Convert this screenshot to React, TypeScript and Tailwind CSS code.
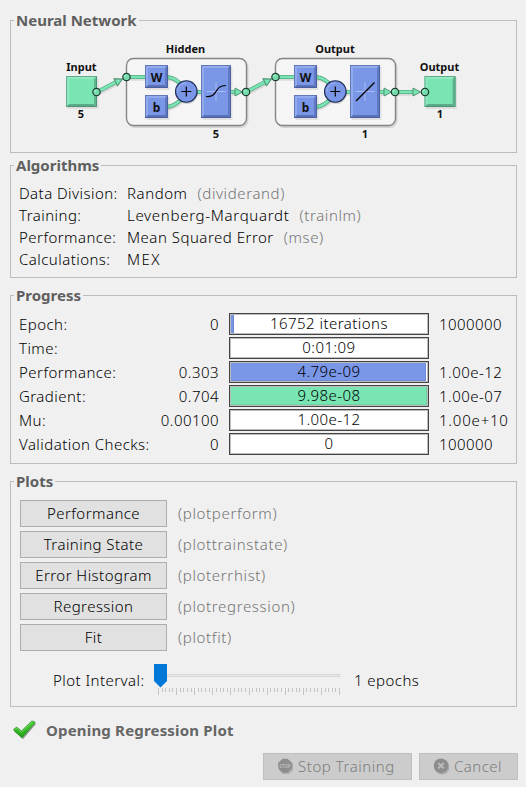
import type { ReactNode } from "react";

function Panel({ title, className, children }: { title: string; className: string; children: ReactNode }) {
  return (
    <fieldset className={`w-[507px] border border-[#bdbdbd] ${className}`}>
      <legend className="ml-[3px] h-[17px] px-[2px] text-[15px] leading-[17px] font-bold tracking-normal text-[#5f5f5f]">{title}</legend>
      {children}
    </fieldset>
  );
}

function Bevel({ x, y, w, h, green }: { x: number; y: number; w: number; h: number; green?: boolean }) {
  const c = green
    ? { f: "#79e5b3", l: "#8fe9c1", r: "#5fb68f", b: "#5aac88", s: "#3f7b61" }
    : { f: "#7a96e6", l: "#93aaee", r: "#6079c2", b: "#5a71b8", s: "#3d4f88" };
  const X = x + w;
  const Y = y + h;
  return (
    <g>
      <rect x={x + 1.5} y={y + 2} width={w} height={h} fill="#000" opacity="0.08" />
      <rect x={x} y={y} width={w} height={h} fill={c.f} />
      <path d={`M${x} ${y}H${X}L${X - 3} ${y + 3}H${x + 3}V${Y - 3}L${x} ${Y}Z`} fill={c.l} />
      <path d={`M${X} ${y}V${Y}L${X - 3} ${Y - 3}V${y + 3}Z`} fill={c.r} />
      <path d={`M${x} ${Y}H${X}L${X - 3} ${Y - 3}H${x + 3}Z`} fill={c.b} />
      <rect x={x + 0.5} y={y + 0.5} width={w - 1} height={h - 1} fill="none" stroke={c.s} strokeOpacity="0.55" />
    </g>
  );
}

function Link({ d }: { d: string }) {
  return (
    <g fill="none">
      <path d={d} stroke="#000" strokeOpacity="0.1" strokeWidth="3.5" transform="translate(1 2)" />
      <path d={d} stroke="#55a380" strokeWidth="4" />
      <path d={d} stroke="#79e5b3" strokeWidth="2.7" />
    </g>
  );
}

function Port({ x, y }: { x: number; y: number }) {
  return (
    <g>
      <circle cx={x} cy={y} r="3.7" fill="#74dcac" stroke="#1f3d30" strokeWidth="1.2" />
      <path d={`M${x - 2} ${y}a2 2 0 0 1 2-2`} stroke="#b9f5da" fill="none" />
    </g>
  );
}

function Arrow({ x, y, rotate = 0 }: { x: number; y: number; rotate?: number }) {
  return (
    <path d="M0 0L-7.5-4V4Z" transform={`translate(${x} ${y}) rotate(${rotate})`} fill="#79e5b3" stroke="#458a6b" strokeWidth="0.9" />
  );
}

function Layer({ x, linear }: { x: number; linear?: boolean }) {
  return (
    <g transform={`translate(${x} 0)`}>
      <rect x="2" y="60" width="119.5" height="67" rx="7" fill="none" stroke="#000" strokeOpacity="0.12" strokeWidth="2" />
      <rect x="0.5" y="58.5" width="120" height="67" rx="7" fill="#f5f5f5" stroke="#858585" strokeWidth="1.4" />
      <Link d="M0 77H19" />
      <Link d="M41 77Q51 78 57 87" />
      <Link d="M41 107Q50 106 57 97" />
      <Link d="M70 92H76" />
      <Bevel x={19} y={65} w={23} h={23} />
      <Bevel x={19} y={95} w={23} h={23} />
      <Bevel x={75} y={65} w={30} h={53} />
      <circle cx="61" cy="93" r="11" fill="#000" opacity="0.15" />
      <circle cx="60.3" cy="91.5" r="10.8" fill="#7a96e6" stroke="#1f2a52" strokeWidth="1.1" />
      <path d="M51.8 91.5a8.5 8.5 0 0 1 8.5-8.5" fill="none" stroke="#9fb4f0" />
      <path d="M55.3 91.5H65.3M60.3 86.5V96.5" stroke="#000" strokeWidth="1.2" />
      <path d="M80.5 91.5H99.5M90 82.5V101" stroke="#a9bcf3" strokeWidth="1" />
      <path d={linear ? "M81 101L99.5 82.5" : "M80 96.5C93 98 87 85.5 100 85.5"} fill="none" stroke="#000" strokeWidth="1.2" />
      <text x="30.5" y="82" textAnchor="middle" fontSize="12">W</text>
      <text x="30.5" y="111.5" textAnchor="middle" fontSize="12">b</text>
      <Link d="M105 92H111" />
      <Arrow x={116.5} y={92} />
    </g>
  );
}

function NetworkDiagram() {
  return (
    <svg className="ml-[49px] block tracking-normal" width="400" height="104" viewBox="60 40 400 104" fontFamily="'Noto Sans', sans-serif" fontWeight="700" fill="#111" fontSize="11">
      <Bevel x={66} y={76} w={31} h={31} green />
      <Bevel x={424.5} y={76} w={31} h={31} green />
      <Layer x={126} />
      <Layer x={275} linear />
      <Link d="M97 92L117 81.5" />
      <Arrow x={122.5} y={79} rotate={-26} />
      <Link d="M246 92L266 81.5" />
      <Arrow x={271.5} y={79} rotate={-26} />
      <Link d="M395 92H414" />
      <Arrow x={420.5} y={92} />
      <Port x={96.5} y={92} />
      <Port x={126.5} y={77} />
      <Port x={246} y={92} />
      <Port x={275.5} y={77} />
      <Port x={395} y={92} />
      <Port x={425} y={92} />
      <g textAnchor="middle">
        <text x="81.5" y="71">Input</text>
        <text x="439.5" y="71">Output</text>
        <text x="185.5" y="53">Hidden</text>
        <text x="335" y="53">Output</text>
        <text x="81" y="118">5</text>
        <text x="440" y="118">1</text>
        <text x="216" y="138">5</text>
        <text x="365" y="138">1</text>
      </g>
    </svg>
  );
}

const algorithms = [
  { label: "Data Division:", value: "Random", fn: "(dividerand)", track: "tracking-[0.55px]" },
  { label: "Training:", value: "Levenberg-Marquardt", fn: "(trainlm)", track: "tracking-[0.7px]" },
  { label: "Performance:", value: "Mean Squared Error", fn: "(mse)", track: "tracking-[0.5px]" },
  { label: "Calculations:", value: "MEX", fn: "", track: "tracking-[1.4px]" },
];

const progress = [
  { label: "Epoch:", start: "0", text: "16752 iterations", end: "1000000", fill: "w-[3px] bg-[#7a96e6] border-r border-[#6a85d2]", endTrack: "" },
  { label: "Time:", start: "", text: "0:01:09", end: "", fill: "w-0", endTrack: "" },
  { label: "Performance:", start: "0.303", text: "4.79e-09", end: "1.00e-12", fill: "w-[195px] bg-[#7a96e6] border-r border-b border-[#6f8ad8]", endTrack: "" },
  { label: "Gradient:", start: "0.704", text: "9.98e-08", end: "1.00e-07", fill: "w-[196px] bg-[#79e5b3] border-r border-b border-[#6dd3a3]", endTrack: "" },
  { label: "Mu:", start: "0.00100", text: "1.00e-12", end: "1.00e+10", fill: "w-0", endTrack: "tracking-[0.8px]" },
  { label: "Validation Checks:", start: "0", text: "0", end: "100000", fill: "w-0", endTrack: "" },
];

const plots = [
  { label: "Performance", fn: "(plotperform)" },
  { label: "Training State", fn: "(plottrainstate)" },
  { label: "Error Histogram", fn: "(ploterrhist)" },
  { label: "Regression", fn: "(plotregression)" },
  { label: "Fit", fn: "(plotfit)" },
];

function Slider() {
  return (
    <svg width="190" height="34" viewBox="152 663 190 34" shapeRendering="crispEdges">
      <rect x="160.5" y="674.5" width="179" height="2" fill="#e7eaea" stroke="#d6d6d6" />
      {Array.from({ length: 51 }, (_, i) => (
        <rect key={i} x={Math.round(158 + i * 3.62)} y="688" width="1" height={i % 5 === 0 ? 7 : 4} fill="#c4c4c4" />
      ))}
      <path d="M154 664H167V681L160.5 687.5L154 681Z" fill="#0078d7" shapeRendering="auto" />
    </svg>
  );
}

function CheckMark() {
  return (
    <svg className="ml-[2px]" width="26" height="22" viewBox="12 719 26 22">
      <defs>
        <linearGradient id="check" x1="0" y1="0" x2="0" y2="1">
          <stop offset="0" stopColor="#4fd23c" />
          <stop offset="1" stopColor="#1fa016" />
        </linearGradient>
      </defs>
      <path d="M13.5 730.5L17 727.5L21.5 731.3L32 721.2Q34 721.5 35.3 723L22.3 738.2Z" fill="#000" opacity="0.35" transform="translate(0.7 1)" />
      <path
        d="M13.500 730Q14.500 728 16.800 727.300L21.500 731L31.500 721.300Q34 720.800 35.200 722.600L22 737.700Z"
        fill="url(#check)"
        stroke="#25931c"
        strokeWidth="0.8"
        strokeLinejoin="round"
      />
      <path d="M15 729.300L16.800 728.300L21.500 732.200L32 722" fill="none" stroke="#8be87b" strokeWidth="0.9" opacity="0.7" />
    </svg>
  );
}

export default function App() {
  return (
    <div className="h-[787px] w-[526px] overflow-hidden bg-[#f0f0f0] pt-[12px] pl-[10px] font-['Noto_Sans',sans-serif] text-[15px] leading-[22px] font-light tracking-[0.45px] whitespace-nowrap text-black">
      <Panel title="Neural Network" className="h-[141px]">
        <div className="pt-[11px]">
          <NetworkDiagram />
        </div>
      </Panel>

      <Panel title="Algorithms" className="mt-[4px] h-[121px]">
        <div className="pt-[8px] pl-[8px]">
          {algorithms.map((a) => (
            <div key={a.label} className="flex h-[22px]">
              <span className="w-[108px]">{a.label}</span>
              <span className={a.track}>{a.value}</span>
              <span className="ml-[10px] tracking-[0.6px] text-[#747474]">{a.fn}</span>
            </div>
          ))}
        </div>
      </Panel>

      <Panel title="Progress" className="mt-[9px] h-[177px]">
        <div className="flex flex-col gap-[2px] pt-[9px] pl-[8px]">
          {progress.map((p) => (
            <div key={p.label} className="flex h-[22px] leading-[22px]">
              <span className="w-[140px]">{p.label}</span>
              <span className="w-[60px] text-right">{p.start}</span>
              <div className="relative ml-[10px] h-[22px] w-[200px] border border-[#444] bg-white">
                <div className="h-[20px] border border-[#bcbcbc]">
                  <div className={`h-[18px] ${p.fill}`} />
                </div>
                <span className="absolute inset-0 text-center leading-[19px]">{p.text}</span>
              </div>
              <span className={`ml-[10px] ${p.endTrack}`}>{p.end}</span>
            </div>
          ))}
        </div>
      </Panel>

      <Panel title="Plots" className="mt-[9px] h-[234px]">
        <div className="flex flex-col gap-[4px] pt-[10px] pl-[9px]">
          {plots.map((p) => (
            <div key={p.label} className="flex h-[27px] items-center">
              <button className="h-[27px] w-[147px] border border-[#adadad] bg-[#e1e1e1] leading-[25px]">{p.label}</button>
              <span className="ml-[11px] pb-[1px] tracking-[0.65px] text-[#747474]">{p.fn}</span>
            </div>
          ))}
        </div>
        <div className="mt-[12px] flex pl-[42px]">
          <span className="w-[99px] pt-[6px]">Plot Interval:</span>
          <Slider />
          <span className="ml-[12px] pt-[6px]">1 epochs</span>
        </div>
      </Panel>

      <div className="mt-[12px] flex h-[22px] items-center">
        <CheckMark />
        <span className="ml-[8px] font-bold tracking-[0.18px] text-[#666]">Opening Regression Plot</span>
      </div>

      <div className="mt-[12px] flex gap-[7px] pl-[253px] text-[#7c7c7c]">
        <button className="flex h-[27px] w-[149px] items-center border border-[#bfbfbf] bg-[#ccc] pl-[13px]">
          <svg width="18" height="18" viewBox="0 0 18 18">
            <path d="M6 2h6l4 4v6l-4 4H6l-4-4V6Z" fill="#aaa" />
            <path d="M5.5 .8h5l4.3 4v5.4l-4.3 4.3h-5L1.200 10.200V4.800Z" fill="#8d8d8d" />
            <text x="8" y="9.6" textAnchor="middle" fontSize="4.5" fontWeight="700" letterSpacing="0" fill="#bbb">STOP</text>
          </svg>
          <span className="ml-[3px] pb-[2px] tracking-[0.55px]">Stop Training</span>
        </button>
        <button className="flex h-[27px] w-[99px] items-center border border-[#bfbfbf] bg-[#ccc] pl-[13px]">
          <svg width="18" height="18" viewBox="0 0 18 18">
            <circle cx="9" cy="9" r="7.5" fill="#aaa" />
            <circle cx="8" cy="7.7" r="7.2" fill="#8d8d8d" />
            <path d="M5.300 5l5.400 5.400M10.700 5L5.300 10.400" stroke="#bbb" strokeWidth="2" />
          </svg>
          <span className="ml-[3px] pb-[2px]">Cancel</span>
        </button>
      </div>
    </div>
  );
}
